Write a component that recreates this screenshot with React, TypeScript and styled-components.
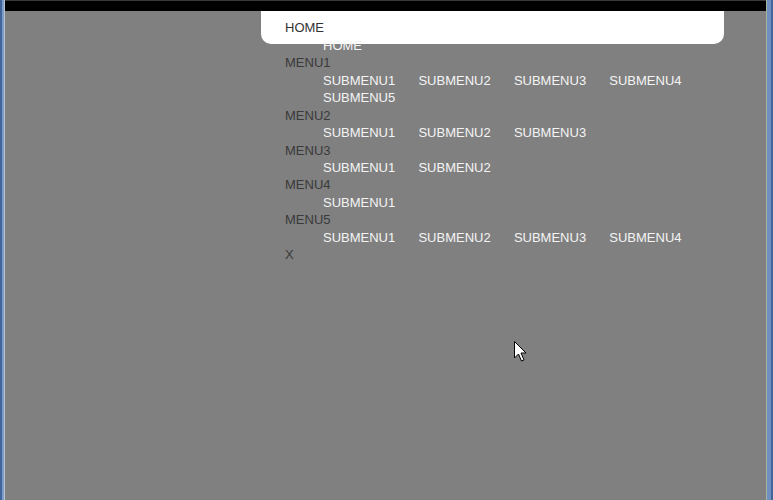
import styled, { createGlobalStyle } from 'styled-components'

const GlobalStyle = createGlobalStyle`
  html, body {
    margin: 0;
    padding: 0;
    background: #808080;
  }
`

const Window = styled.div`
  position: relative;
  width: 773px;
  height: 500px;
  overflow: hidden;
  background: #808080;
  font-family: 'Liberation Sans', Arial, sans-serif;
  box-shadow:
    inset 2px 0 #41649a,
    inset 4px 0 #7e9cc8,
    inset 5px 0 #b9c3cf,
    inset -2px 0 #41649a,
    inset -6px 0 #6f8fc0,
    inset -7px 0 #a9b2a0;
`

const TopBar = styled.div`
  height: 11px;
  margin: 0 7px 0 5px;
  background: #000;
  border-top: 1px solid #3a3a3a;
  box-sizing: border-box;
`

const Header = styled.div`
  display: flex;
  align-items: center;
  width: 463px;
  height: 33px;
  margin-left: 261px;
  padding-left: 24px;
  box-sizing: border-box;
  background: #fff;
  border-radius: 0 0 10px 10px;
  font-size: 13px;
  color: #333;
`

const MenuList = styled.div`
  width: 439px;
  margin: -7.2px 0 0 285px;
  font-size: 13px;
  line-height: 17.45px;
`

const MenuLabel = styled.div`
  color: #3a3a3a;
`

const SubList = styled.div`
  display: flex;
  flex-wrap: wrap;
  padding-left: 38px;
`

const SubItem = styled.span`
  margin-right: 23.2px;
  color: #f4f4f4;
`

const Cursor = styled.svg`
  position: absolute;
  left: 514px;
  top: 341px;
  width: 13px;
  height: 21px;
`

const groups: { label?: string; subs: string[] }[] = [
  { subs: ['HOME'] },
  { label: 'MENU1', subs: ['SUBMENU1', 'SUBMENU2', 'SUBMENU3', 'SUBMENU4', 'SUBMENU5'] },
  { label: 'MENU2', subs: ['SUBMENU1', 'SUBMENU2', 'SUBMENU3'] },
  { label: 'MENU3', subs: ['SUBMENU1', 'SUBMENU2'] },
  { label: 'MENU4', subs: ['SUBMENU1'] },
  { label: 'MENU5', subs: ['SUBMENU1', 'SUBMENU2', 'SUBMENU3', 'SUBMENU4'] },
]

export default function App() {
  return (
    <Window>
      <GlobalStyle />
      <TopBar />
      <Header>HOME</Header>
      <MenuList>
        {groups.map((g, i) => (
          <div key={i}>
            {g.label && <MenuLabel>{g.label}</MenuLabel>}
            <SubList>
              {g.subs.map((s) => (
                <SubItem key={s}>{s}</SubItem>
              ))}
            </SubList>
          </div>
        ))}
        <MenuLabel>X</MenuLabel>
      </MenuList>
      <Cursor viewBox="0 0 13 21">
        <path
          d="M0.5 0.5 L0.5 17 L4.5 13 L7.5 20 L10 19 L7 12 L12 12 Z"
          fill="#fff"
          stroke="#000"
          strokeWidth="1"
          strokeLinejoin="miter"
        />
      </Cursor>
    </Window>
  )
}
